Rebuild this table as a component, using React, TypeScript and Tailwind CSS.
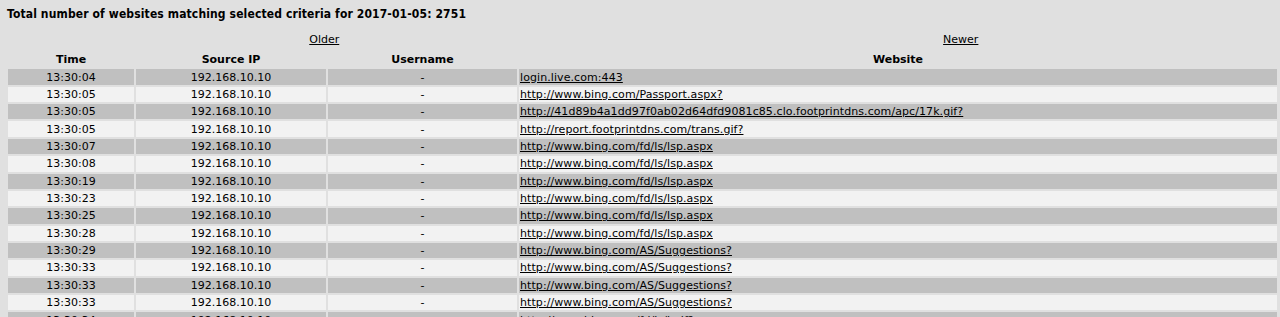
const rows: [string, string][] = [
  ['13:30:04', 'login.live.com:443'],
  ['13:30:05', 'http://www.bing.com/Passport.aspx?'],
  ['13:30:05', 'http://41d89b4a1dd97f0ab02d64dfd9081c85.clo.footprintdns.com/apc/17k.gif?'],
  ['13:30:05', 'http://report.footprintdns.com/trans.gif?'],
  ['13:30:07', 'http://www.bing.com/fd/ls/lsp.aspx'],
  ['13:30:08', 'http://www.bing.com/fd/ls/lsp.aspx'],
  ['13:30:19', 'http://www.bing.com/fd/ls/lsp.aspx'],
  ['13:30:23', 'http://www.bing.com/fd/ls/lsp.aspx'],
  ['13:30:25', 'http://www.bing.com/fd/ls/lsp.aspx'],
  ['13:30:28', 'http://www.bing.com/fd/ls/lsp.aspx'],
  ['13:30:29', 'http://www.bing.com/AS/Suggestions?'],
  ['13:30:33', 'http://www.bing.com/AS/Suggestions?'],
  ['13:30:33', 'http://www.bing.com/AS/Suggestions?'],
  ['13:30:33', 'http://www.bing.com/AS/Suggestions?'],
  ['13:30:34', 'http://www.bing.com/fd/ls/l.gif?'],
];

export default function App() {
  return (
    <div className="min-h-screen bg-[#e0e0e0] text-black font-['DejaVu_Sans',Verdana,sans-serif] text-[11px] overflow-hidden">
      {/* header */}
      <h1 className="pl-[7px] pt-[6px] text-[12px] leading-[16px] font-bold font-['DejaVu_Sans_Condensed','DejaVu_Sans',sans-serif] tracking-[0.13px]">
        Total number of websites matching selected criteria for 2017-01-05: 2751
      </h1>

      {/* paging */}
      <div className="ml-[6px] mr-[1px] mt-[11px] flex leading-[14px]">
        <div className="flex-1 text-center">
          <a href="#" className="underline">Older</a>
        </div>
        <div className="flex-1 text-center">
          <a href="#" className="underline">Newer</a>
        </div>
      </div>

      <table className="ml-[6px] mt-[3px] w-[1273px] border-separate border-spacing-[2px] table-fixed">
        <colgroup>
          <col className="w-[126px]" />
          <col className="w-[190px]" />
          <col className="w-[189px]" />
          <col />
        </colgroup>
        <thead>
          <tr>
            <th className="h-[15.36px] p-0 leading-[15px] font-bold">Time</th>
            <th className="h-[15.36px] p-0 leading-[15px] font-bold">Source IP</th>
            <th className="h-[15.36px] p-0 leading-[15px] font-bold">Username</th>
            <th className="h-[15.36px] p-0 leading-[15px] font-bold">Website</th>
          </tr>
        </thead>
        <tbody>
          {rows.map(([time, site], i) => (
            <tr key={i} className={i % 2 === 0 ? 'bg-[#c0c0c0]' : 'bg-[#f2f2f2]'}>
              <td className="h-[15.36px] p-0 leading-[15px] text-center">{time}</td>
              <td className="h-[15.36px] p-0 leading-[15px] text-center">192.168.10.10</td>
              <td className="h-[15.36px] p-0 leading-[15px] text-center">-</td>
              <td className="h-[15.36px] py-0 pl-[1px] leading-[15px] whitespace-nowrap tracking-[0.08px]">
                <a href="#" className="underline">{site}</a>
              </td>
            </tr>
          ))}
        </tbody>
      </table>
    </div>
  );
}
